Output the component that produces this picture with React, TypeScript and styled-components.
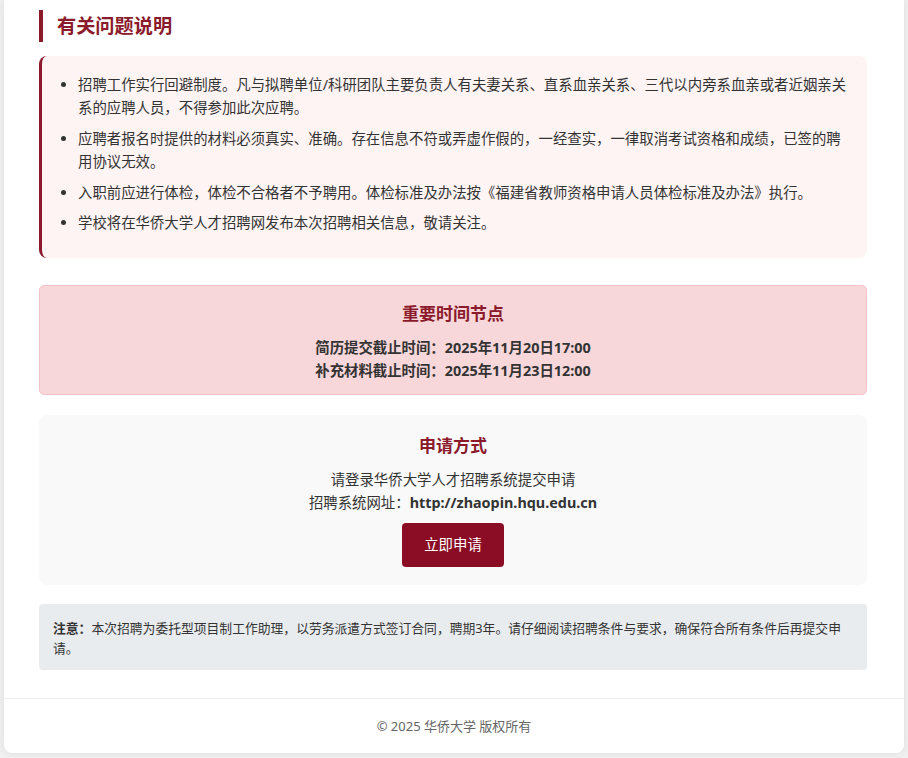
import React from 'react'
import styled, { createGlobalStyle } from 'styled-components'

const GlobalStyle = createGlobalStyle`
  html, body {
    margin: 0;
    padding: 0;
  }
  body {
    background-color: #f0f0f1;
    font-family: "Noto Sans", "Noto Sans CJK SC", sans-serif;
    color: #333;
    padding-bottom: 5px;
  }
`

const notices = [
  '招聘工作实行回避制度。凡与拟聘单位/科研团队主要负责人有夫妻关系、直系血亲关系、三代以内旁系血亲或者近姻亲关系的应聘人员，不得参加此次应聘。',
  '应聘者报名时提供的材料必须真实、准确。存在信息不符或弄虚作假的，一经查实，一律取消考试资格和成绩，已签的聘用协议无效。',
  '入职前应进行体检，体检不合格者不予聘用。体检标准及办法按《福建省教师资格申请人员体检标准及办法》执行。',
  '学校将在华侨大学人才招聘网发布本次招聘相关信息，敬请关注。',
]

const deadlines = [
  { label: '简历提交截止时间：', value: '2025年11月20日17:00' },
  { label: '补充材料截止时间：', value: '2025年11月23日12:00' },
]

export default function App() {
  return (
    <>
      <GlobalStyle />
      <Page>
        <Content>
          <SectionHeading>有关问题说明</SectionHeading>
          <NoticeBox>
            <NoticeList>
              {notices.map(text => (
                <NoticeItem key={text}>{text}</NoticeItem>
              ))}
            </NoticeList>
          </NoticeBox>

          <DeadlineBox>
            <BoxTitle>重要时间节点</BoxTitle>
            {deadlines.map(d => (
              <DeadlineLine key={d.label}>
                {d.label}
                {d.value}
              </DeadlineLine>
            ))}
          </DeadlineBox>

          <ApplyBox>
            <BoxTitle>申请方式</BoxTitle>
            <ApplyLine>请登录华侨大学人才招聘系统提交申请</ApplyLine>
            <ApplyLine>
              招聘系统网址：<strong>http://zhaopin.hqu.edu.cn</strong>
            </ApplyLine>
            <ApplyButton type="button">立即申请</ApplyButton>
          </ApplyBox>

          <NoteBox>
            <NoteText>
              <strong>注意：</strong>本次招聘为委托型项目制工作助理，以劳务派遣方式签订合同，聘期3年。请仔细阅读招聘条件与要求，确保符合所有条件后再提交申请。
            </NoteText>
          </NoteBox>
        </Content>
        <Footer>© 2025 华侨大学 版权所有</Footer>
      </Page>
    </>
  )
}

const Page = styled.div`
  max-width: 900px;
  margin: 0 auto;
  background-color: #fff;
  border-radius: 0 0 8px 8px;
  box-shadow: 0 0 8px rgba(0, 0, 0, 0.08);
`

const Content = styled.main`
  padding: 10px 37px 28px 35px;
  display: flex;
  flex-direction: column;
`

const SectionHeading = styled.h2`
  margin: 0 0 14px;
  padding-left: 14px;
  border-left: 4px solid #8b1a2c;
  font-size: 19.2px;
  line-height: 32px;
  font-weight: 700;
  color: #8b1a2c;
`

const NoticeBox = styled.div`
  background-color: #fff4f4;
  border-left: 3px solid #8b1a2c;
  border-radius: 8px;
  padding: 17px 20px 16px 20px;
  margin-bottom: 27px;
`

const NoticeList = styled.ul`
  margin: 0;
  padding-left: 16px;
`

const NoticeItem = styled.li`
  font-size: 14.4px;
  line-height: 23px;
  color: #333;
  margin-bottom: 8px;

  &:nth-child(3) {
    margin-bottom: 7px;
  }
`

const BoxTitle = styled.h3`
  margin: 0 0 12px;
  font-size: 17px;
  line-height: 21px;
  font-weight: 700;
  color: #8b1a2c;
`

const DeadlineBox = styled.div`
  background-color: #f8d7da;
  border: 1px solid #f1c4c9;
  border-radius: 5px;
  padding: 17px 20px 12px;
  text-align: center;
  margin-bottom: 20px;
`

const DeadlineLine = styled.p`
  margin: 0;
  font-size: 14.4px;
  line-height: 23px;
  font-weight: 700;
  color: #333;
`

const ApplyBox = styled.div`
  background-color: #f9f9f9;
  border-radius: 8px;
  padding: 20px 20px 18px;
  text-align: center;
  margin-bottom: 19px;
  display: flex;
  flex-direction: column;
  align-items: center;
`

const ApplyLine = styled.p`
  margin: 0;
  font-size: 14.4px;
  line-height: 23px;
  color: #333;

  strong {
    font-weight: 700;
  }
`

const ApplyButton = styled.button`
  margin-top: 9px;
  padding: 12px 22px;
  background-color: #8b0d25;
  color: #fff;
  border: none;
  border-radius: 4px;
  font-family: inherit;
  font-size: 14.4px;
  line-height: 20px;
  cursor: pointer;
`

const NoteBox = styled.div`
  background-color: #e9ecef;
  border-radius: 4px;
  padding: 15px 14px 12px;
`

const NoteText = styled.p`
  margin: 0;
  font-size: 12.8px;
  line-height: 19.5px;
  color: #333;

  strong {
    font-weight: 700;
  }
`

const Footer = styled.footer`
  border-top: 1px solid #eee;
  padding: 18px 20px;
  text-align: center;
  font-size: 13px;
  line-height: 18px;
  color: #666;
`
